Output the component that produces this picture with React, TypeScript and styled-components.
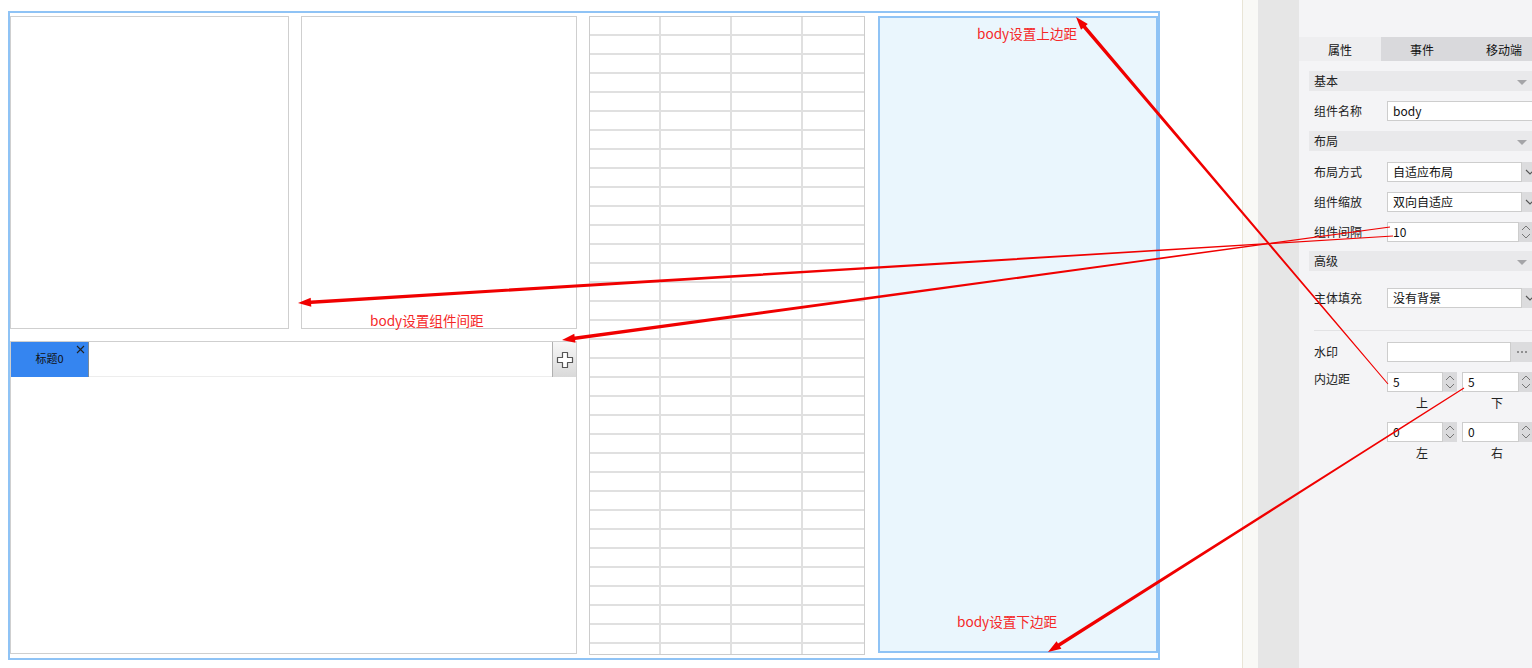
import React from "react";
import styled, { createGlobalStyle } from "styled-components";

const GlobalStyle = createGlobalStyle`
  html, body { margin: 0; padding: 0; background: #fff; }
  body { font-family: "Noto Sans CJK SC", "Noto Sans", sans-serif; color: #333; }
  * { box-sizing: border-box; }
`;

const Page = styled.div`
  position: relative;
  width: 1532px;
  height: 668px;
  display: flex;
  overflow: hidden;
  background: #fff;
`;

const Canvas = styled.div`
  width: 1242px;
  flex: none;
  padding: 11px 0 0 8px;
  background: #fff;
`;

const BodyFrame = styled.div`
  width: 1152px;
  height: 649px;
  border: 2px solid #8fc3f5;
  padding: 3px 0 3px 0;
  display: grid;
  grid-template-columns: 567px 276px 1fr;
  column-gap: 12px;
`;

const LeftColumn = styled.div`
  display: grid;
  grid-template-rows: 313px 313px;
  row-gap: 12px;
`;

const TopRow = styled.div`
  display: grid;
  grid-template-columns: 279px 1fr;
  column-gap: 12px;
`;

const EmptyBox = styled.div`
  border: 1px solid #cfcfcf;
  background: #fff;
`;

const TabWidget = styled.div`
  border: 1px solid #cfcfcf;
  background: #fff;
  display: flex;
  flex-direction: column;
`;

const TabBar = styled.div`
  height: 35px;
  display: flex;
  border-bottom: 1px solid #ededed;
  flex: none;
`;

const TabItem = styled.div`
  position: relative;
  width: 78px;
  height: 35px;
  background: #3585f0;
  border-right: 1px solid #7a8a9a;
  display: flex;
  align-items: center;
  justify-content: center;
  padding-bottom: 3px;
  font-size: 11px;
  color: #111;
`;

const TabClose = styled.svg`
  position: absolute;
  top: 3px;
  right: 3px;
`;

const TabSpacer = styled.div`
  flex: 1;
`;

const AddButton = styled.div`
  width: 24px;
  height: 35px;
  background: linear-gradient(#f7f7f7, #d9d9d9);
  border-left: 1px solid #b0b0b0;
  display: flex;
  align-items: center;
  justify-content: center;
`;

const TableGrid = styled.div`
  border: 1px solid #cccccc;
  background: #e0e0e0;
  display: grid;
  grid-template-columns: 69px 69px 69px 1fr;
  grid-template-rows: repeat(33, 17px) 1fr;
  gap: 2px;
`;

const Cell = styled.div`
  background: #fff;
`;

const BluePanel = styled.div`
  margin-left: 1px;
  height: 637px;
  border: 2px solid #8fc3f5;
  background: #eaf6fd;
`;

const Divider = styled.div`
  width: 1px;
  flex: none;
  background: #e9e5d6;
`;

const Gutter = styled.div`
  width: 15px;
  flex: none;
  background: #f9f9f6;
`;

const Rail = styled.div`
  width: 41px;
  flex: none;
  background: #e6e6e6;
`;

const Sidebar = styled.div`
  flex: 1;
  background: #f4f4f6;
  padding-top: 37px;
  overflow: hidden;
  font-size: 12px;
  color: #222;
`;

const Tabs = styled.div`
  display: flex;
  height: 24px;
  width: 246px;
`;

const Tab = styled.div<{ $active?: boolean }>`
  width: 82px;
  flex: none;
  display: flex;
  align-items: center;
  justify-content: center;
  background: ${(p) => (p.$active ? "#eeeef0" : "#d9d9dc")};
  color: #111;
`;

const SectionHeader = styled.div<{ $mt: number }>`
  margin: ${(p) => p.$mt}px 0 0 10px;
  height: 20px;
  display: flex;
  align-items: center;
  justify-content: space-between;
  padding: 0 5px 2px 5px;
  background: #e9e9eb;
  color: #222;
`;

const Caret = styled.span`
  width: 0;
  height: 0;
  border-left: 5px solid transparent;
  border-right: 5px solid transparent;
  border-top: 5px solid #a5a5a8;
  margin-top: 4px;
`;

const FormRow = styled.div<{ $mt: number; $top?: boolean }>`
  margin-top: ${(p) => p.$mt}px;
  height: 20px;
  display: flex;
  align-items: ${(p) => (p.$top ? "flex-start" : "center")};
  padding-left: 15px;
`;

const Label = styled.div<{ $top?: boolean }>`
  width: 73px;
  flex: none;
  color: #222;
  line-height: ${(p) => (p.$top ? "14px" : "20px")};
`;

const Control = styled.div<{ $w: number }>`
  width: ${(p) => p.$w}px;
  flex: none;
  height: 20px;
  display: flex;
`;

const Field = styled.div`
  flex: 1;
  height: 20px;
  background: #fff;
  border: 1px solid #cdcdcd;
  padding-left: 5px;
  padding-bottom: 1px;
  display: flex;
  align-items: center;
  color: #111;
  font-size: 12px;
  white-space: nowrap;
  overflow: hidden;
`;

const SideButton = styled.div<{ $w: number; $bg?: string }>`
  width: ${(p) => p.$w}px;
  flex: none;
  height: 20px;
  background: ${(p) => p.$bg || "#dcdcde"};
  display: flex;
  align-items: center;
  justify-content: center;
  color: #777;
  font-size: 10px;
`;

const PairRow = styled.div`
  display: flex;
  gap: 5px;
`;

const Separator = styled.div`
  margin: 22px 0 0 15px;
  height: 1px;
  background: #e2e2e4;
`;

const CaptionRow = styled.div`
  height: 22px;
  padding-left: 88px;
  display: flex;
  gap: 5px;
`;

const Caption = styled.div`
  width: 70px;
  text-align: center;
  line-height: 22px;
  font-size: 12px;
  color: #222;
`;

const Overlay = styled.svg`
  position: absolute;
  left: 0;
  top: 0;
  pointer-events: none;
`;

const Note = styled.div`
  position: absolute;
  font-size: 13.6px;
  line-height: 20px;
  color: #f52828;
  white-space: nowrap;
`;

function Spinner() {
  return (
    <svg width="14" height="20" viewBox="0 0 14 20">
      <path d="M3 8 L7 4 L11 8" fill="none" stroke="#777" strokeWidth="1" />
      <path d="M3 12 L7 16 L11 12" fill="none" stroke="#777" strokeWidth="1" />
    </svg>
  );
}

function Chevron() {
  return (
    <svg width="10" height="6" viewBox="0 0 10 6">
      <path d="M1 1 L5 5 L9 1" fill="none" stroke="#555" strokeWidth="1.1" />
    </svg>
  );
}

function Dots() {
  return (
    <svg width="12" height="4" viewBox="0 0 12 4">
      <circle cx="2" cy="2" r="1" fill="#777" />
      <circle cx="6" cy="2" r="1" fill="#777" />
      <circle cx="10" cy="2" r="1" fill="#777" />
    </svg>
  );
}

function arrowPoints(
  x1: number,
  y1: number,
  x2: number,
  y2: number,
  w1: number,
  w2: number,
  hl: number,
  hw: number
) {
  const dx = x2 - x1;
  const dy = y2 - y1;
  const L = Math.hypot(dx, dy);
  const ux = dx / L;
  const uy = dy / L;
  const nx = -uy;
  const ny = ux;
  const bx = x2 - ux * hl;
  const by = y2 - uy * hl;
  const pts: [number, number][] = [
    [x1 + (nx * w1) / 2, y1 + (ny * w1) / 2],
    [bx + (nx * w2) / 2, by + (ny * w2) / 2],
    [bx + (nx * hw) / 2, by + (ny * hw) / 2],
    [x2, y2],
    [bx - (nx * hw) / 2, by - (ny * hw) / 2],
    [bx - (nx * w2) / 2, by - (ny * w2) / 2],
    [x1 - (nx * w1) / 2, y1 - (ny * w1) / 2],
  ];
  return pts.map((p) => `${p[0].toFixed(1)},${p[1].toFixed(1)}`).join(" ");
}

const arrows = [
  { x1: 1388, y1: 384, x2: 1076, y2: 17 },
  { x1: 1390, y1: 227, x2: 562, y2: 340 },
  { x1: 1393, y1: 236, x2: 298, y2: 303 },
  { x1: 1464, y1: 388, x2: 1048, y2: 652 },
];

export default function App() {
  const cells = Array.from({ length: 34 * 4 }, (_, i) => <Cell key={i} />);
  return (
    <>
      <GlobalStyle />
      <Page>
        <Canvas>
          <BodyFrame>
            <LeftColumn>
              <TopRow>
                <EmptyBox />
                <EmptyBox />
              </TopRow>
              <TabWidget>
                <TabBar>
                  <TabItem>
                    标题0
                    <TabClose width="9" height="9" viewBox="0 0 9 9">
                      <path d="M1 1 L8 8 M8 1 L1 8" stroke="#222" strokeWidth="1.1" />
                    </TabClose>
                  </TabItem>
                  <TabSpacer />
                  <AddButton>
                    <svg width="18" height="18" viewBox="0 0 18 18">
                      <path
                        d="M6.5 1.5 H11.5 V6.5 H16.5 V11.5 H11.5 V16.5 H6.5 V11.5 H1.5 V6.5 H6.5 Z"
                        fill="#fff"
                        stroke="#555"
                        strokeWidth="1.2"
                        strokeLinejoin="round"
                      />
                    </svg>
                  </AddButton>
                </TabBar>
              </TabWidget>
            </LeftColumn>
            <TableGrid>{cells}</TableGrid>
            <BluePanel />
          </BodyFrame>
        </Canvas>
        <Divider />
        <Gutter />
        <Rail />
        <Sidebar>
          <Tabs>
            <Tab $active>属性</Tab>
            <Tab>事件</Tab>
            <Tab>移动端</Tab>
          </Tabs>
          <SectionHeader $mt={10}>
            基本
            <Caret />
          </SectionHeader>
          <FormRow $mt={10}>
            <Label>组件名称</Label>
            <Control $w={160}>
              <Field>body</Field>
            </Control>
          </FormRow>
          <SectionHeader $mt={10}>
            布局
            <Caret />
          </SectionHeader>
          <FormRow $mt={11}>
            <Label>布局方式</Label>
            <Control $w={151}>
              <Field>自适应布局</Field>
              <SideButton $w={16}>
                <Chevron />
              </SideButton>
            </Control>
          </FormRow>
          <FormRow $mt={10}>
            <Label>组件缩放</Label>
            <Control $w={151}>
              <Field>双向自适应</Field>
              <SideButton $w={16}>
                <Chevron />
              </SideButton>
            </Control>
          </FormRow>
          <FormRow $mt={10}>
            <Label>组件间隔</Label>
            <Control $w={146}>
              <Field>10</Field>
              <SideButton $w={14} $bg="#dadadc">
                <Spinner />
              </SideButton>
            </Control>
          </FormRow>
          <SectionHeader $mt={9}>
            高级
            <Caret />
          </SectionHeader>
          <FormRow $mt={17}>
            <Label>主体填充</Label>
            <Control $w={151}>
              <Field>没有背景</Field>
              <SideButton $w={16}>
                <Chevron />
              </SideButton>
            </Control>
          </FormRow>
          <Separator />
          <FormRow $mt={11}>
            <Label>水印</Label>
            <Control $w={145}>
              <Field />
              <SideButton $w={21}>
                <Dots />
              </SideButton>
            </Control>
          </FormRow>
          <FormRow $mt={10} $top>
            <Label $top>内边距</Label>
            <PairRow>
              <Control $w={70}>
                <Field>5</Field>
                <SideButton $w={14} $bg="#dadadc">
                  <Spinner />
                </SideButton>
              </Control>
              <Control $w={71}>
                <Field>5</Field>
                <SideButton $w={14} $bg="#dadadc">
                  <Spinner />
                </SideButton>
              </Control>
            </PairRow>
          </FormRow>
          <CaptionRow>
            <Caption>上</Caption>
            <Caption>下</Caption>
          </CaptionRow>
          <FormRow $mt={8}>
            <Label />
            <PairRow>
              <Control $w={70}>
                <Field>0</Field>
                <SideButton $w={14} $bg="#dadadc">
                  <Spinner />
                </SideButton>
              </Control>
              <Control $w={71}>
                <Field>0</Field>
                <SideButton $w={14} $bg="#dadadc">
                  <Spinner />
                </SideButton>
              </Control>
            </PairRow>
          </FormRow>
          <CaptionRow>
            <Caption>左</Caption>
            <Caption>右</Caption>
          </CaptionRow>
        </Sidebar>

        <Note style={{ left: 977, top: 23 }}>body设置上边距</Note>
        <Note style={{ left: 370, top: 310 }}>body设置组件间距</Note>
        <Note style={{ left: 957, top: 611 }}>body设置下边距</Note>

        <Overlay width="1532" height="668" viewBox="0 0 1532 668">
          {arrows.map((a, i) => (
            <polygon
              key={i}
              points={arrowPoints(a.x1, a.y1, a.x2, a.y2, 1, 3.6, 13, 9)}
              fill="#f00000"
            />
          ))}
        </Overlay>
      </Page>
    </>
  );
}
